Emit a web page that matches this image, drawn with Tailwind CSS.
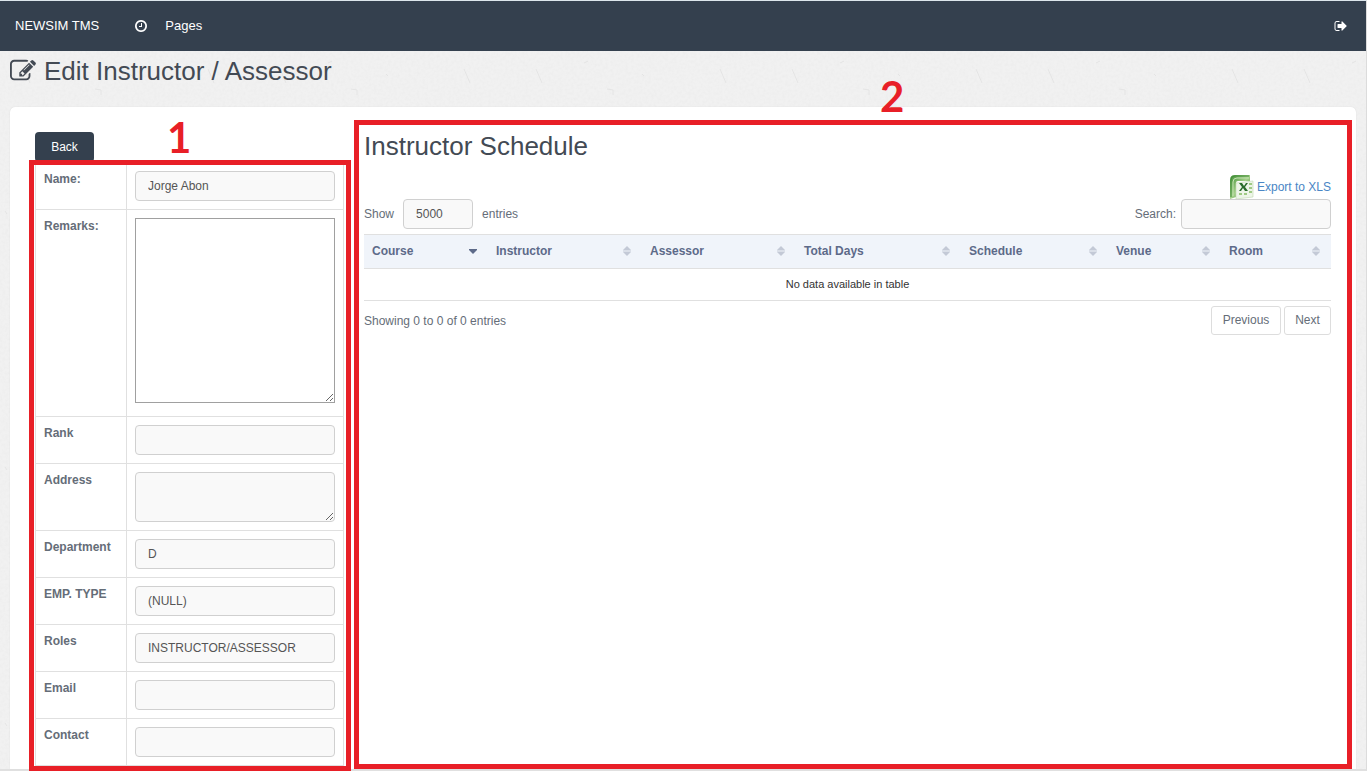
<!DOCTYPE html>
<html lang="en">
<head>
<meta charset="utf-8">
<meta name="viewport" content="width=device-width, initial-scale=1">
<title>NEWSIM TMS - Edit Instructor / Assessor</title>
<script src="https://cdn.jsdelivr.net/npm/@tailwindcss/browser@4"></script>
</head>
<body class="bg-[#f1f1f1] font-['Liberation_Sans',Arial,sans-serif] text-xs text-[#656d78]">
<svg class="hidden">
  <symbol id="sort" viewBox="0 0 8 10"><path d="M4 0L8 4V4.500H0V4zM4 10L0 6V5.500H8V6z" fill="currentColor"/></symbol>
</svg>
<div class="relative isolate flex min-h-screen flex-col border-t border-r border-b-2 border-t-[#dce6ec] border-r-[#dcdcdc] border-b-[#e0e0e0]">
  <!-- paper texture -->
  <svg class="absolute inset-0 -z-10 h-full w-full" aria-hidden="true">
    <defs>
      <filter id="grain" x="0" y="0" width="100%" height="100%">
        <feTurbulence type="fractalNoise" baseFrequency="0.35" numOctaves="3" seed="4"/>
        <feColorMatrix values="0 0 0 0 0.5  0 0 0 0 0.5  0 0 0 0 0.5  0.14 0 0 0 -0.05"/>
      </filter>
      <pattern id="fibres" width="256" height="256" patternUnits="userSpaceOnUse">
        <path d="M208 68l6 14M280 68l6 14M24 68l6 14M95 88l6 1v5M72 62l4-2M150 130l5 3M12 150l3 5M246 160l3 4M5 210l2 3M222 240l3-3M130 73l2 2" stroke="#e4e4e4" fill="none"/>
      </pattern>
    </defs>
    <rect width="100%" height="100%" filter="url(#grain)"/>
    <rect width="100%" height="100%" fill="url(#fibres)"/>
  </svg>

  <nav class="flex h-[50px] items-center bg-[#34404e] px-[15px] text-[13px] text-white">
    <a href="#" class="mr-[35px]">NEWSIM TMS</a>
    <a href="#" class="flex items-center gap-[17px]">
      <svg class="size-[14px]" viewBox="0 0 1792 1792" fill="currentColor" aria-hidden="true"><path d="M1024 544v448q0 14-9 23t-23 9h-320q-14 0-23-9t-9-23v-64q0-14 9-23t23-9h224v-352q0-14 9-23t23-9h64q14 0 23 9t9 23zm416 352q0-148-73-273t-198-198-273-73-273 73-198 198-73 273 73 273 198 198 273 73 273-73 198-198 73-273zm224 0q0 209-103 385.5t-279.5 279.5-385.5 103-385.5-103-279.5-279.5-103-385.5 103-385.5 279.5-279.5 385.5-103 385.5 103 279.5 279.5 103 385.5z"/></svg>
      Pages
    </a>
    <a href="#" class="ml-auto mr-[3px]" aria-label="Sign out">
      <svg class="size-[14px]" viewBox="0 0 1792 1792" fill="currentColor"><path d="M704 1440q0 4 1 20t.5 26.5-3 23.5-10 19.5-20.5 6.5h-320q-119 0-203.5-84.5t-84.5-203.5v-704q0-119 84.5-203.5t203.5-84.5h320q13 0 22.5 9.5t9.5 22.5q0 4 1 20t.5 26.5-3 23.5-10 19.5-20.5 6.5h-320q-66 0-113 47t-47 113v704q0 66 47 113t113 47h312l11.5 1 11.5 3 8 5.5 7 9 2 13.5zm928-544q0 26-19 45l-544 544q-19 19-45 19t-45-19-19-45v-288h-448q-26 0-45-19t-19-45v-384q0-26 19-45t45-19h448v-288q0-26 19-45t45-19 45 19l544 544q19 19 19 45z"/></svg>
    </a>
  </nav>

  <h1 class="mb-4 flex h-10 items-center gap-2 px-[10px] text-[26px] text-[#434a54]">
    <svg class="size-[26px]" viewBox="0 0 1792 1792" fill="currentColor" aria-hidden="true"><path d="M888 1184l116-116-152-152-116 116v56h96v96h56zm440-720q-16-16-33 1l-350 350q-17 17-1 33t33-1l350-350q17-17 1-33zm80 594v190q0 119-84.5 203.5t-203.5 84.5h-832q-119 0-203.5-84.5t-84.5-203.5v-832q0-119 84.5-203.5t203.5-84.5h832q63 0 117 25 15 7 18 23 3 17-9 29l-49 49q-14 14-32 8-23-6-45-6h-832q-66 0-113 47t-47 113v832q0 66 47 113t113 47h832q66 0 113-47t47-113v-126q0-13 9-22l64-64q15-15 35-7t20 29zm-96-738l288 288-672 672h-288v-288zm444 132l-92 92-288-288 92-92q28-28 68-28t68 28l152 152q28 28 28 68t-28 68z"/></svg>
    Edit Instructor / Assessor
  </h1>

  <main class="mx-[10px] flex flex-1 gap-5 rounded-t-[5px] bg-white px-[25px] pt-[25px] shadow-[0_0_1px_#ccc]">
    <form class="flex shrink-0 flex-col">
      <button type="button" class="h-[30px] w-[59px] rounded-[4px] bg-[#34404e] text-white">Back</button>
      <div class="relative flex-1">
        <table class="w-[309px] border-collapse [&_td]:border [&_td]:border-[#e0e0e0] [&_td]:px-2 [&_td]:pt-2 [&_td]:pb-2 [&_th]:w-[91px] [&_th]:border [&_th]:border-[#e0e0e0] [&_th]:px-2 [&_th]:pt-2 [&_th]:text-left [&_th]:align-top [&_th]:font-bold [&_input]:block [&_input]:h-[30px] [&_input]:w-full [&_input]:rounded-[4px] [&_input]:border [&_input]:border-[#d0d0d0] [&_input]:bg-[#f9f9f9] [&_input]:px-3 [&_input]:text-[#555]">
          <tbody>
            <tr><th scope="row"><label for="name">Name:</label></th><td><input id="name" value="Jorge Abon"></td></tr>
            <tr><th scope="row"><label for="remarks">Remarks:</label></th><td><textarea id="remarks" class="mb-[5px] block h-[185px] w-full border border-[#a0a0a0] bg-white p-1"></textarea></td></tr>
            <tr><th scope="row"><label for="rank">Rank</label></th><td><input id="rank"></td></tr>
            <tr><th scope="row"><label for="address">Address</label></th><td><textarea id="address" class="block h-[50px] w-full rounded-[4px] border border-[#d0d0d0] bg-[#f9f9f9] px-3 py-1"></textarea></td></tr>
            <tr><th scope="row"><label for="department">Department</label></th><td><input id="department" value="D"></td></tr>
            <tr><th scope="row"><label for="emp">EMP. TYPE</label></th><td><input id="emp" value="(NULL)"></td></tr>
            <tr><th scope="row"><label for="roles">Roles</label></th><td><input id="roles" value="INSTRUCTOR/ASSESSOR"></td></tr>
            <tr><th scope="row"><label for="email">Email</label></th><td><input id="email" type="email"></td></tr>
            <tr><th scope="row"><label for="contact">Contact</label></th><td><input id="contact"></td></tr>
          </tbody>
        </table>
        <!-- callout 1 -->
        <div class="pointer-events-none absolute -top-[2px] -right-[7px] -bottom-[2px] -left-[6px] border-[5px] border-[#e81f27]">
          <span class="absolute -top-[50px] left-[133px] font-['Lato',sans-serif] text-[42px] leading-[44px] font-bold text-[#e81f27]">1</span>
        </div>
      </div>
    </form>

    <section class="relative min-w-0 flex-1">
      <h2 class="mb-[15px] text-[26px] leading-[28px] text-[#434a54]">Instructor Schedule</h2>
      <div class="flex justify-end">
        <a href="#" class="flex h-6 items-center gap-[3px] leading-[14px] text-[#4a86c5]">
          <svg class="size-6" viewBox="0 0 24 24" aria-hidden="true">
            <defs><linearGradient id="xls" x2="1" y2="1"><stop stop-color="#3f8f35"/><stop offset=".5" stop-color="#a5d08a"/><stop offset="1" stop-color="#3d8c34"/></linearGradient></defs>
            <path d="M0 24V5Q0 0 5 0h15v6H8q-2 0-2 2v14z" fill="url(#xls)"/>
            <path d="M1 22V5q0-4 4-4h14" fill="none" stroke="#478f3c"/>
            <path d="M3 21V7q0-4 4-4h12" fill="none" stroke="#c5e2b3"/>
            <path d="M6 8l17-2v16L6 24z" fill="#eef5e9" stroke="#bfd7b0" stroke-width=".6"/>
            <path d="M9 8h3l2 3 2-3h2l-3 4 3 4h-3l-2-3-2 3H9l3-4z" fill="#286b2b"/>
            <path d="M19 8h3v2h-3zM19 12h3v2h-3zM19 16h3v2h-3zM9 18h3v2H9zM14 18h3v2h-3z" fill="#9fca84"/>
          </svg>
          Export to XLS
        </a>
      </div>
      <div class="mb-[5px] flex items-center justify-between">
        <label class="flex items-center gap-[9px]">Show
          <select class="h-[30px] w-[70px] appearance-none rounded-[4px] border border-[#d0d0d0] bg-[#f9f9f9] px-3 text-[#555]"><option>5000</option></select>
          entries</label>
        <label class="flex items-center gap-[5px]">Search:
          <input type="search" class="h-[30px] w-[150px] rounded-[4px] border border-[#d0d0d0] bg-[#f9f9f9] px-3"></label>
      </div>
      <table class="w-full table-fixed border-collapse">
        <colgroup><col class="w-[124px]"><col class="w-[154px]"><col class="w-[154px]"><col class="w-[165px]"><col class="w-[147px]"><col class="w-[113px]"><col class="w-[110px]"></colgroup>
        <thead class="bg-[#f0f4fa] text-[#5d6a89] [&_button]:flex [&_button]:h-[33px] [&_button]:w-full [&_button]:items-center [&_button]:justify-between [&_button]:pr-[11px] [&_button]:pb-[2px] [&_button]:pl-2 [&_button]:font-bold [&_svg]:h-[10px] [&_svg]:w-2 [&_svg]:text-[#c3c9d6]">
          <tr class="border-y border-[#e0e0e0]">
            <th><button type="button">Course<svg viewBox="0 0 8 10"><path d="M0 3h8v1L4 8 0 4z" fill="#5d6a89"/></svg></button></th>
            <th><button type="button">Instructor<svg><use href="#sort"/></svg></button></th>
            <th><button type="button">Assessor<svg><use href="#sort"/></svg></button></th>
            <th><button type="button">Total Days<svg><use href="#sort"/></svg></button></th>
            <th><button type="button">Schedule<svg><use href="#sort"/></svg></button></th>
            <th><button type="button">Venue<svg><use href="#sort"/></svg></button></th>
            <th><button type="button">Room<svg><use href="#sort"/></svg></button></th>
          </tr>
        </thead>
        <tbody><tr class="border-b border-[#e0e0e0]"><td colspan="7" class="h-8 text-center text-[11px] text-[#333]">No data available in table</td></tr></tbody>
      </table>
      <div class="mt-[5px] flex items-center justify-between">
        <p>Showing 0 to 0 of 0 entries</p>
        <div class="flex gap-[3px]">
          <button type="button" class="h-[29px] w-[70px] rounded-[3px] border border-[#ddd] pb-[2px]">Previous</button>
          <button type="button" class="h-[29px] w-[47px] rounded-[3px] border border-[#ddd] pb-[2px]">Next</button>
        </div>
      </div>
      <!-- callout 2 -->
      <div class="pointer-events-none absolute -top-3 -right-[21px] bottom-0 -left-[10px] border-[5px] border-[#e81f27]">
        <span class="absolute -top-[51px] left-[521px] font-['Lato',sans-serif] text-[42px] leading-[44px] font-bold text-[#e81f27]">2</span>
      </div>
    </section>
  </main>
</div>
</body>
</html>
